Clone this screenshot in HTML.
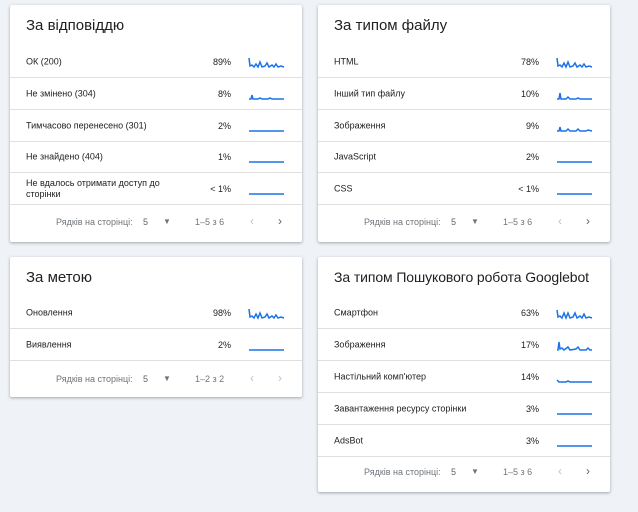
<!DOCTYPE html>
<html><head><meta charset="utf-8"><style>
*{margin:0;padding:0;box-sizing:border-box}
body{width:638px;height:512px;background:#eff2f7;font-family:"Liberation Sans",Arial,sans-serif;position:relative;overflow:hidden;color:#202124}
.card{position:absolute;width:292px;background:#fff;box-shadow:0 1px 3px rgba(60,64,67,.3),0 1px 2px rgba(60,64,67,.15);border-radius:2px}
.t{position:absolute;left:16px;top:12px;font-size:15px;color:#202124;white-space:nowrap}
.row{position:absolute;left:0;width:292px;height:32px;border-bottom:1px solid #e0e0e0;font-size:9px}
.row .l{position:absolute;left:16px;top:50%;transform:translateY(-50%);line-height:11px;width:160px}
.row .p{position:absolute;right:71px;top:50%;transform:translateY(-50%)}
.row svg{position:absolute;left:238px;top:10px}
.ft{position:absolute;left:0;width:292px;font-size:9px;color:#70757a}
.ft span{position:absolute;top:-5px}
</style></head><body>

<div class="card" style="left:10px;top:5px;height:237px">
<div class="t">За відповіддю</div>
<div class="row" style="top:41px"><span class="l">ОК (200)</span><span class="p">89%</span><svg width="38" height="14"><polyline fill="none" stroke="#1a73e8" stroke-width="1.5" points="1,2 2,10 4,9 6,11 8,8 10,11 12,6 14,11 17,10 19,7 21,11 24,9 26,11 28,8 30,11 33,10 36,11"/></svg></div>
<div class="row" style="top:73px"><span class="l">Не змінено (304)</span><span class="p">8%</span><svg width="38" height="14"><polyline fill="none" stroke="#1a73e8" stroke-width="1.5" points="1,11 3,11 4,7 5,11 10,11 12,10 14,11 20,11 22,10 24,11 36,11"/></svg></div>
<div class="row" style="top:105px"><span class="l">Тимчасово перенесено (301)</span><span class="p">2%</span><svg width="38" height="14"><polyline fill="none" stroke="#1a73e8" stroke-width="1.5" points="1,11 36,11"/></svg></div>
<div class="row" style="top:136px"><span class="l">Не знайдено (404)</span><span class="p">1%</span><svg width="38" height="14"><polyline fill="none" stroke="#1a73e8" stroke-width="1.5" points="1,11 36,11"/></svg></div>
<div class="row" style="top:168px"><span class="l">Не вдалось отримати доступ до сторінки</span><span class="p">&lt; 1%</span><svg width="38" height="14"><polyline fill="none" stroke="#1a73e8" stroke-width="1.5" points="1,11 36,11"/></svg></div>
<div class="ft" style="top:217px"><span style="left:46px">Рядків на сторінці:</span><span style="left:133px;color:#5f6368">5</span><span style="left:153px;font-size:8px">▼</span><span style="left:185px">1–5 з 6</span><span style="left:240px;font-size:12px;top:-8px;color:#bdc1c6">‹</span><span style="left:268px;font-size:12px;top:-8px;color:#5f6368">›</span></div>
</div>

<div class="card" style="left:318px;top:5px;height:237px">
<div class="t">За типом файлу</div>
<div class="row" style="top:41px"><span class="l">HTML</span><span class="p">78%</span><svg width="38" height="14"><polyline fill="none" stroke="#1a73e8" stroke-width="1.5" points="1,2 2,10 4,9 6,11 8,7 10,11 12,6 14,11 17,10 19,7 21,11 24,9 26,11 28,8 30,11 33,10 36,11"/></svg></div>
<div class="row" style="top:73px"><span class="l">Інший тип файлу</span><span class="p">10%</span><svg width="38" height="14"><polyline fill="none" stroke="#1a73e8" stroke-width="1.5" points="1,11 3,11 4,5 5,11 10,11 12,9 14,11 20,11 22,10 24,11 36,11"/></svg></div>
<div class="row" style="top:105px"><span class="l">Зображення</span><span class="p">9%</span><svg width="38" height="14"><polyline fill="none" stroke="#1a73e8" stroke-width="1.5" points="1,11 3,11 4,7 5,11 10,11 12,9 14,11 20,11 22,9 24,11 30,11 32,10 36,11"/></svg></div>
<div class="row" style="top:136px"><span class="l">JavaScript</span><span class="p">2%</span><svg width="38" height="14"><polyline fill="none" stroke="#1a73e8" stroke-width="1.5" points="1,11 36,11"/></svg></div>
<div class="row" style="top:168px"><span class="l">CSS</span><span class="p">&lt; 1%</span><svg width="38" height="14"><polyline fill="none" stroke="#1a73e8" stroke-width="1.5" points="1,11 36,11"/></svg></div>
<div class="ft" style="top:217px"><span style="left:46px">Рядків на сторінці:</span><span style="left:133px;color:#5f6368">5</span><span style="left:153px;font-size:8px">▼</span><span style="left:185px">1–5 з 6</span><span style="left:240px;font-size:12px;top:-8px;color:#bdc1c6">‹</span><span style="left:268px;font-size:12px;top:-8px;color:#5f6368">›</span></div>
</div>

<div class="card" style="left:10px;top:257px;height:140px">
<div class="t">За метою</div>
<div class="row" style="top:40px"><span class="l">Оновлення</span><span class="p">98%</span><svg width="38" height="14"><polyline fill="none" stroke="#1a73e8" stroke-width="1.5" points="1,2 2,10 4,9 6,11 8,7 10,11 12,6 14,11 17,10 19,7 21,11 24,9 26,11 28,8 30,11 33,10 36,11"/></svg></div>
<div class="row" style="top:72px"><span class="l">Виявлення</span><span class="p">2%</span><svg width="38" height="14"><polyline fill="none" stroke="#1a73e8" stroke-width="1.5" points="1,11 36,11"/></svg></div>
<div class="ft" style="top:122px"><span style="left:46px">Рядків на сторінці:</span><span style="left:133px;color:#5f6368">5</span><span style="left:153px;font-size:8px">▼</span><span style="left:185px">1–2 з 2</span><span style="left:240px;font-size:12px;top:-8px;color:#bdc1c6">‹</span><span style="left:268px;font-size:12px;top:-8px;color:#bdc1c6">›</span></div>
</div>

<div class="card" style="left:318px;top:257px;height:235px">
<div class="t" style="font-size:14px;letter-spacing:-0.1px">За типом Пошукового робота Googlebot</div>
<div class="row" style="top:40px"><span class="l">Смартфон</span><span class="p">63%</span><svg width="38" height="14"><polyline fill="none" stroke="#1a73e8" stroke-width="1.5" points="1,3 2,10 4,9 6,11 8,6 10,11 12,6 14,11 17,10 19,6 21,11 24,9 26,11 28,7 30,11 33,10 36,11"/></svg></div>
<div class="row" style="top:72px"><span class="l">Зображення</span><span class="p">17%</span><svg width="38" height="14"><polyline fill="none" stroke="#1a73e8" stroke-width="1.5" points="1,11 2,11 3,3 4,10 6,9 8,11 12,8 14,11 20,10 22,8 24,11 30,11 32,9 34,11 36,11"/></svg></div>
<div class="row" style="top:104px"><span class="l">Настільний комп'ютер</span><span class="p">14%</span><svg width="38" height="14"><polyline fill="none" stroke="#1a73e8" stroke-width="1.5" points="1,9 3,11 10,11 12,10 14,11 36,11"/></svg></div>
<div class="row" style="top:136px"><span class="l">Завантаження ресурсу сторінки</span><span class="p">3%</span><svg width="38" height="14"><polyline fill="none" stroke="#1a73e8" stroke-width="1.5" points="1,11 36,11"/></svg></div>
<div class="row" style="top:168px"><span class="l">AdsBot</span><span class="p">3%</span><svg width="38" height="14"><polyline fill="none" stroke="#1a73e8" stroke-width="1.5" points="1,11 36,11"/></svg></div>
<div class="ft" style="top:215px"><span style="left:46px">Рядків на сторінці:</span><span style="left:133px;color:#5f6368">5</span><span style="left:153px;font-size:8px">▼</span><span style="left:185px">1–5 з 6</span><span style="left:240px;font-size:12px;top:-8px;color:#bdc1c6">‹</span><span style="left:268px;font-size:12px;top:-8px;color:#5f6368">›</span></div>
</div>

</body></html>
